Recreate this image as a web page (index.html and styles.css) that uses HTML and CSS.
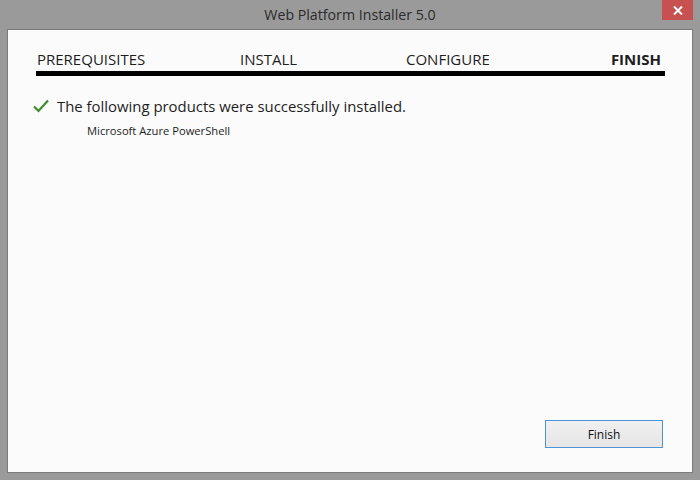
FILE: index.html
```html
<!DOCTYPE html>
<html lang="en">
<head>
  <meta charset="UTF-8" />
  <title>Web Platform Installer 5.0</title>
  <link rel="stylesheet" href="styles.css">
</head>
<body>
  <div class="window">
    <div class="titlebar">
      <span class="title">Web Platform Installer 5.0</span>
      <button class="close" title="Close">
        <svg width="10" height="9" viewBox="0 0 10 9"><path d="M1 0.5 L9 8.5 M9 0.5 L1 8.5" stroke="#fff" stroke-width="2"/></svg>
      </button>
    </div>

    <div class="panel">
      <div class="steps">
        <span class="step">PREREQUISITES</span>
        <span class="step">INSTALL</span>
        <span class="step">CONFIGURE</span>
        <span class="step current">FINISH</span>
      </div>
      <div class="steps-bar"></div>

      <div class="result">
        <svg class="check" width="16" height="14" viewBox="0 0 16 14">
          <path d="M1 7.5 L5.5 12 L15 1.5" fill="none" stroke="#3d8b2f" stroke-width="2.2"/>
        </svg>
        <span class="result-text">The following products were successfully installed.</span>
      </div>
      <div class="product">Microsoft Azure PowerShell</div>

      <div class="footer">
        <button class="btn">Finish</button>
      </div>
    </div>
  </div>
</body>
</html>
```

FILE: styles.css
```css
body { margin: 0; background: #999; font-family: "Open Sans", "Noto Sans", sans-serif; }
.window {
  width: 700px; height: 480px; box-sizing: border-box;
  display: flex; flex-direction: column; padding: 0 7px 7px 7px;
  background: #9a9a9a;
}
.titlebar {
  height: 29px; display: flex; justify-content: center; align-items: center;
  position: relative;
}
.title { font-size: 14.2px; color: #2b2b2b; margin-top: -1px; }
.close {
  position: absolute; top: 0; right: 0; width: 31px; height: 20px;
  border: none; padding: 0; background: #c75050;
  display: flex; align-items: center; justify-content: center;
}
.panel {
  flex: 1; background: #fbfbfb; border: 1px solid #7b7b7b;
  display: flex; flex-direction: column; padding: 0 27px 24px 28px;
}
.steps {
  display: grid; grid-template-columns: 203px 166px 1fr auto;
  margin-top: 19px; font-size: 15px; line-height: 20px; color: #1e1e1e;
  padding-left: 1px; padding-right: 4px;
}
.step.current { font-weight: bold; }
.steps-bar { height: 5px; background: #000; margin-top: 2px; }
.result { display: flex; align-items: center; margin-top: 20px; margin-left: -3px; }
.check { margin-right: 8px; }
.result-text { font-size: 14.9px; color: #1e1e1e; }
.product { font-size: 11.2px; color: #1e1e1e; margin: 7px 0 0 51px; }
.footer { margin-top: auto; display: flex; justify-content: flex-end; margin-right: 2px; }
.btn {
  width: 118px; height: 28px; font-family: inherit; font-size: 12px; color: #111;
  border: 1px solid #4f94d8; background: linear-gradient(#f0f0f0, #e5e5e5);
}
```
